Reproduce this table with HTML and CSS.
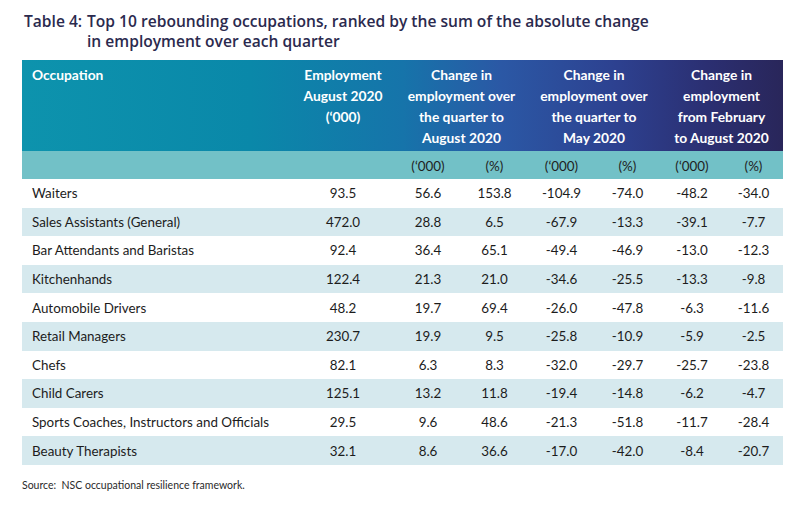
FILE: index.html
```html
<!DOCTYPE html>
<html>
<head>
<meta charset="utf-8">
<link rel="stylesheet" href="styles.css">
</head>
<body>
<div class="page">
  <h1 class="title"><span class="title-label">Table 4:</span><span class="title-text">Top 10 rebounding occupations, ranked by the sum of the absolute change<br>in employment over each quarter</span></h1>
  <table class="data">
    <colgroup>
      <col class="c-occ"><col class="c-emp"><col class="c-a"><col class="c-b"><col class="c-c"><col class="c-d"><col class="c-e"><col class="c-f">
    </colgroup>
    <thead>
      <tr class="head">
        <th class="h-occ">Occupation</th>
        <th>Employment<br>August 2020<br>(‘000)</th>
        <th colspan="2">Change in<br>employment over<br>the quarter to<br>August 2020</th>
        <th colspan="2">Change in<br>employment over<br>the quarter to<br>May 2020</th>
        <th colspan="2">Change in<br>employment<br>from February<br>to August 2020</th>
      </tr>
      <tr class="sub">
        <td></td><td></td>
        <td>(‘000)</td><td>(%)</td><td>(‘000)</td><td>(%)</td><td>(‘000)</td><td>(%)</td>
      </tr>
    </thead>
    <tbody>
      <tr><td>Waiters</td><td>93.5</td><td>56.6</td><td>153.8</td><td>-104.9</td><td>-74.0</td><td>-48.2</td><td>-34.0</td></tr>
      <tr><td>Sales Assistants (General)</td><td>472.0</td><td>28.8</td><td>6.5</td><td>-67.9</td><td>-13.3</td><td>-39.1</td><td>-7.7</td></tr>
      <tr><td>Bar Attendants and Baristas</td><td>92.4</td><td>36.4</td><td>65.1</td><td>-49.4</td><td>-46.9</td><td>-13.0</td><td>-12.3</td></tr>
      <tr><td>Kitchenhands</td><td>122.4</td><td>21.3</td><td>21.0</td><td>-34.6</td><td>-25.5</td><td>-13.3</td><td>-9.8</td></tr>
      <tr><td>Automobile Drivers</td><td>48.2</td><td>19.7</td><td>69.4</td><td>-26.0</td><td>-47.8</td><td>-6.3</td><td>-11.6</td></tr>
      <tr><td>Retail Managers</td><td>230.7</td><td>19.9</td><td>9.5</td><td>-25.8</td><td>-10.9</td><td>-5.9</td><td>-2.5</td></tr>
      <tr><td>Chefs</td><td>82.1</td><td>6.3</td><td>8.3</td><td>-32.0</td><td>-29.7</td><td>-25.7</td><td>-23.8</td></tr>
      <tr><td>Child Carers</td><td>125.1</td><td>13.2</td><td>11.8</td><td>-19.4</td><td>-14.8</td><td>-6.2</td><td>-4.7</td></tr>
      <tr><td>Sports Coaches, Instructors and Officials</td><td>29.5</td><td>9.6</td><td>48.6</td><td>-21.3</td><td>-51.8</td><td>-11.7</td><td>-28.4</td></tr>
      <tr><td>Beauty Therapists</td><td>32.1</td><td>8.6</td><td>36.6</td><td>-17.0</td><td>-42.0</td><td>-8.4</td><td>-20.7</td></tr>
    </tbody>
  </table>
  <p class="source">Source:&nbsp; NSC occupational resilience framework.</p>
</div>
</body>
</html>
```
FILE: styles.css
```css
html, body {
  margin: 0;
  padding: 0;
  background: #ffffff;
}

.page {
  width: 809px;
  height: 508px;
  box-sizing: border-box;
  padding: 11px 0 0 22px;
}

.title {
  display: flex;
  margin: 0 0 0 2px;
  font-family: "Open Sans", "DejaVu Sans", sans-serif;
  font-weight: 600;
  font-size: 15.6px;
  line-height: 20px;
  color: #2b2a4e;
  height: 49px;
  white-space: nowrap;
}

.title-label {
  flex: 0 0 63px;
}

.data {
  border-collapse: collapse;
  table-layout: fixed;
  width: 761px;
  font-family: "Lato", "Liberation Sans", sans-serif;
  font-size: 13.4px;
  color: #1c1c1c;
}

.c-occ { width: 269px; }
.c-emp { width: 104px; }
.c-a { width: 66px; }
.c-b { width: 67px; }
.c-c { width: 67px; }
.c-d { width: 65px; }
.c-e { width: 64px; }
.c-f { width: 59px; }

.head {
  height: 91px;
  background: linear-gradient(90deg, #0d93ad 0%, #0a88a9 30%, #1674aa 50%, #2b58a5 63%, #2d4190 78%, #2b2f72 90%, #29265a 100%);
}

.head th {
  color: #ffffff;
  font-weight: 700;
  font-size: 13.8px;
  line-height: 21px;
  text-align: center;
  vertical-align: top;
  padding: 4px 0 0 0;
}

.head th.h-occ {
  text-align: left;
  padding-left: 10px;
}

.sub {
  height: 28px;
  background: #72c1c7;
}

.sub td {
  text-align: center;
  padding: 2px 0 0 0;
  color: #1e1e1e;
}

tbody tr {
  height: 28.6px;
}

tbody tr:nth-child(even) {
  background: #d6e9ee;
}

tbody td {
  text-align: center;
  padding: 0;
  vertical-align: middle;
  white-space: nowrap;
}

tbody td:first-child {
  text-align: left;
  padding-left: 10px;
}

.source {
  margin: 14px 0 0 0;
  font-family: "Lato", "Liberation Sans", sans-serif;
  font-size: 10.5px;
  color: #2a2a2a;
}
```
